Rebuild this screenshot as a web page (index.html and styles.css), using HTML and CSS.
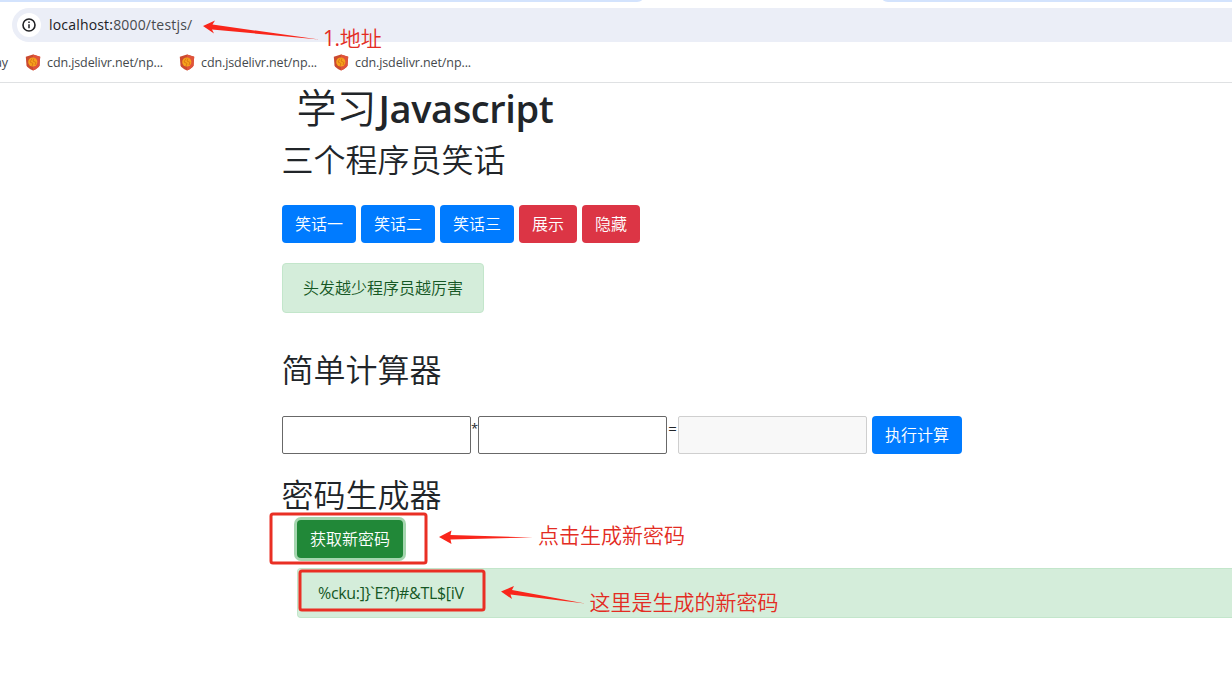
FILE: index.html
```html
<!DOCTYPE html>
<html lang="zh-CN">
<head>
<meta charset="utf-8">
<title>学习Javascript</title>
<link rel="stylesheet" href="styles.css">
</head>
<body>
<svg class="defs" aria-hidden="true">
  <symbol id="shield" viewBox="0 0 16 17">
    <path d="M8 .5 15.200 2.800 14.500 11.500Q14 13.700 8 16.500Q2 13.700 1.500 11.500L.8 2.800Z" fill="#cb4a30"/>
    <path d="M8 .5 15.200 2.800 14.500 11.500Q14 13.700 8 16.500Z" fill="#e0533b"/>
    <circle cx="7.800" cy="8" r="4.600" fill="#f6a21c"/>
    <path d="M7 4.500 5 8 8 9.500 7 12M9 4.500 8 7l3 1.500-1 2.500" fill="none" stroke="#dc7915" stroke-width="1"/>
  </symbol>
</svg>
<header class="chrome">
  <div class="tabs"><span class="tab-left"></span><span class="tab-right"></span></div>
  <div class="address">
    <span class="info"><svg width="16" height="16" viewBox="0 0 16 16"><circle cx="8" cy="8" r="6" fill="none" stroke="#202124" stroke-width="1.600"/><path d="M8 7.200v4M8 4.500v1.500" stroke="#202124" stroke-width="1.500"/></svg></span>
    <span class="url"><b>localhost:</b>8000/testjs/</span>
  </div>
  <nav class="bookmarks">
    <span class="cut">ay</span>
    <a class="bookmark"><svg width="16" height="17"><use href="#shield"/></svg><span>cdn.jsdelivr.net/np...</span></a>
    <a class="bookmark"><svg width="16" height="17"><use href="#shield"/></svg><span>cdn.jsdelivr.net/np...</span></a>
    <a class="bookmark"><svg width="16" height="17"><use href="#shield"/></svg><span>cdn.jsdelivr.net/np...</span></a>
  </nav>
</header>
<main class="page">
  <h1>学习<span class="latin">Javascript</span></h1>
  <h2>三个程序员笑话</h2>
  <div class="row jokes">
    <button class="btn primary">笑话一</button>
    <button class="btn primary">笑话二</button>
    <button class="btn primary">笑话三</button>
    <button class="btn danger">展示</button>
    <button class="btn danger">隐藏</button>
  </div>
  <div class="alert joke">头发越少程序员越厉害</div>
  <h2 class="calc-title">简单计算器</h2>
  <div class="row calc">
    <input class="field"><span class="op">*</span><input class="field"><span class="op eq">=</span><input class="field" disabled>
    <button class="btn primary run">执行计算</button>
  </div>
  <h2 class="pass-title">密码生成器</h2>
  <button class="btn success">获取新密码</button>
  <div class="alert password"><span>%cku:]}`E?f)#&amp;TL$[iV</span></div>
</main>
<div class="notes">
  <svg width="1232" height="694" viewBox="0 0 1232 694">
    <g fill="none" stroke="#e92f24" stroke-width="3">
      <rect x="271" y="514" width="155" height="49" rx="2"/>
      <rect x="300" y="571" width="184" height="39" rx="2"/>
    </g>
    <g fill="#f9261b">
      <path d="M203 26 215 20.500 212.500 24.500 319 39.500 212 29.500 214 33.500Z"/>
      <path d="M439 537 451.500 530.500 450.500 535 533 537.500 450.500 539.500 451.500 544Z"/>
      <path d="M501 591.500 514 586 512 590 585 603.500 510.500 594.500 512 599Z"/>
    </g>
  </svg>
  <span class="note n1"><b>1.</b>地址</span>
  <span class="note n2">点击生成新密码</span>
  <span class="note n3">这里是生成的新密码</span>
</div>
</body>
</html>
```
FILE: styles.css
```css
* { box-sizing: border-box; }
body {
  margin: 0;
  position: relative;
  width: 1232px;
  height: 694px;
  overflow: hidden;
  background: #fff;
  color: #212529;
  font: 16px/24px "Open Sans", "Noto Sans CJK SC", sans-serif;
}
.defs { position: absolute; width: 0; height: 0; }
.chrome { height: 83px; border-bottom: 1px solid #dfe1e3; }
.tabs { display: flex; justify-content: space-between; height: 2px; margin-bottom: 6px; }
.tab-left { width: 642px; background: #d3e3fd; border-bottom-right-radius: 8px 2px; }
.tab-right { width: 349px; background: #d3e3fd; border-bottom-left-radius: 8px 2px; }
.address {
  display: flex;
  align-items: center;
  height: 34px;
  margin-left: 12px;
  padding-left: 5px;
  background: #ebeef7;
  border-radius: 17px 0 0 17px;
}
.info {
  display: flex;
  align-items: center;
  justify-content: center;
  width: 24px;
  height: 24px;
  border-radius: 50%;
  background: #fff;
}
.url { margin-left: 8px; font-size: 14px; letter-spacing: 0.180px; color: #474a4e; white-space: nowrap; }
.url b { font-weight: 400; color: #202124; }
.bookmarks { display: flex; align-items: center; height: 40px; font-size: 12.500px; letter-spacing: -0.100px; color: #44484c; }
.bookmarks span { position: relative; top: 1px; }
.cut { display: flex; justify-content: flex-end; width: 8px; margin-right: 17px; white-space: nowrap; }
.bookmark { display: flex; align-items: center; gap: 6px; width: 154px; white-space: nowrap; }
.page { padding: 2px 0 0 282px; }
h1, h2 { margin: 0; font-weight: 350; white-space: nowrap; text-indent: -0.500px; }
h1 { height: 48px; margin-left: 15px; font-size: 40px; line-height: 46px; }
.latin { margin-left: 2px; font-weight: 600; font-size: 38px; letter-spacing: -0.400px; }
h2 { height: 38px; margin-top: 8px; font-size: 32px; line-height: 38px; }
.row { display: flex; }
.jokes { gap: 5px; margin-top: 26px; }
.btn {
  height: 38px;
  padding: 0 12px 2px;
  border: 0;
  border-radius: 4px;
  color: #fff;
  font: 350 16px/36px "Noto Sans CJK SC", sans-serif;
  white-space: nowrap;
}
.primary { width: 74px; background: #007bff; }
.danger { width: 58px; background: #dc3545; }
.alert {
  height: 50px;
  padding: 12px 20px;
  border: 1px solid #c3e6cb;
  border-radius: 4px;
  background: #d4edda;
  color: #155724;
  font-weight: 350;
}
.joke { width: 202px; margin-top: 20px; }
.calc-title { margin-top: 38px; }
.calc { margin-top: 27px; }
.field { width: 189px; height: 38px; margin: 0; border: 1px solid #686868; border-radius: 2px; background: #fff; }
.field:disabled { border-color: #cfcfcf; background: #f8f8f8; }
.op { width: 7px; font-size: 13px; text-align: center; }
.eq { width: 11px; font-size: 15px; }
.run { width: 90px; margin-left: 5px; }
.pass-title { margin-top: 22px; }
.success {
  display: block;
  width: 106px;
  margin: 6px 0 0 15px;
  background: #218838;
  box-shadow: 0 0 0 3px #a5d6af;
}
.password { margin: 10px 0 0 15px; border-right: 0; border-radius: 4px 0 0 4px; font-weight: 400; letter-spacing: -0.320px; }
.notes { position: absolute; inset: 0; pointer-events: none; }
.notes svg { display: block; }
.note { position: absolute; color: #e32c23; font-size: 21px; line-height: 30px; font-weight: 350; white-space: nowrap; }
.note b { font-weight: 400; letter-spacing: -0.400px; }
.n1 { left: 323px; top: 23px; }
.n2 { left: 538px; top: 520px; }
.n3 { left: 589.500px; top: 587px; }
```
